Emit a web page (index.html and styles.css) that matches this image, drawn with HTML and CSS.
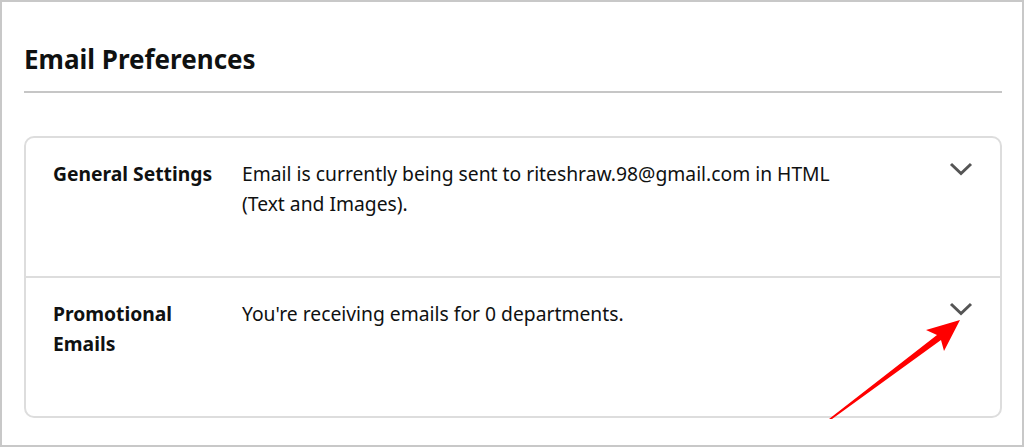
FILE: index.html
```html
<!DOCTYPE html>
<html lang="en">
<head>
    <meta charset="UTF-8">
    <meta name="viewport" content="width=device-width, initial-scale=1.0">
    <title>Email Preferences</title>
    <link rel="stylesheet" href="styles.css">
</head>
<body>
    <div class="frame">
        <h1 class="title">Email Preferences</h1>

        <div class="pref-card">
            <div class="pref-row">
                <div class="pref-label">General Settings</div>
                <div class="pref-text">Email is currently being sent to riteshraw.98@gmail.com in HTML (Text and Images).</div>
                <svg class="chevron" viewBox="0 0 24 14" width="24" height="14">
                    <path d="M2 2 L12 11.5 L22 2" />
                </svg>
            </div>
            <div class="pref-row">
                <div class="pref-label">Promotional Emails</div>
                <div class="pref-text">You're receiving emails for 0 departments.</div>
                <svg class="chevron" viewBox="0 0 24 14" width="24" height="14">
                    <path d="M2 2 L12 11.5 L22 2" />
                </svg>
            </div>
        </div>

        <!-- annotation arrow -->
        <svg class="arrow" viewBox="0 0 1024 447" width="1024" height="447">
            <polygon points="960,320 926,330 937,335 829,419 832,419 941,340 944,351" />
        </svg>
    </div>
</body>
</html>
```

FILE: styles.css
```css
body {
    margin: 0;
    background: #fff;
    font-family: "Noto Sans", "Open Sans", sans-serif;
    color: #0f1111;
}

.frame {
    position: relative;
    box-sizing: border-box;
    width: 1024px;
    height: 447px;
    border: 2px solid #c8c8c8;
    padding: 0 20px 0 22px;
    overflow: hidden;
}

.title {
    margin: 41px 0 0;
    padding-bottom: 16px;
    border-bottom: 2px solid #c6c6c6;
    font-size: 26px;
    line-height: 32px;
    font-weight: 700;
}

.pref-card {
    margin-top: 43px;
    border: 2px solid #dddddd;
    border-radius: 10px;
}

.pref-row {
    display: flex;
    align-items: flex-start;
    padding: 21px 27px 57px 27px;
    font-size: 19.3px;
    line-height: 30px;
}

.pref-row + .pref-row {
    border-top: 2px solid #dddddd;
}

.pref-label {
    flex: 0 0 170px;
    padding-right: 19px;
    font-weight: 700;
}

.pref-text {
    flex: 0 1 610px;
}

.chevron {
    margin-left: auto;
    margin-top: 3px;
    fill: none;
    stroke: #555;
    stroke-width: 3;
}

.arrow {
    position: absolute;
    top: -2px;
    left: -2px;
    pointer-events: none;
    fill: #ff0000;
}
```
